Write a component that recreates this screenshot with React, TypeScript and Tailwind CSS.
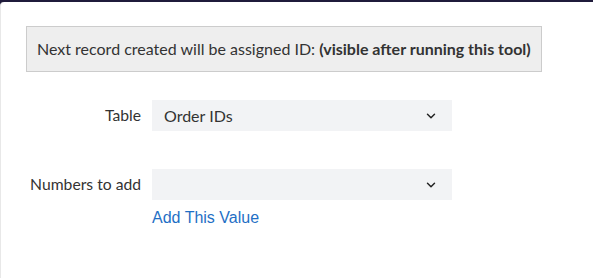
import { ChevronDown } from "lucide-react";

function SelectBox({ value }: { value?: string }) {
  return (
    <div className="flex h-[31px] w-[300px] items-center justify-between bg-[#f2f3f5] pl-[12px] pr-[14px] text-[16px] text-[#333]">
      <span>{value ?? ""}</span>
      <ChevronDown className="h-[14px] w-[14px] text-[#222]" strokeWidth={2.5} />
    </div>
  );
}

export default function App() {
  return (
    <div className="h-[278px] w-[593px] overflow-hidden bg-[#1f1b3b] pt-[2px] font-['Lato','Liberation_Sans',sans-serif]">
      <div className="h-full rounded-tl-[4px] border-l border-[#e8e8e8] bg-white pl-[25px] pt-[24px]">
        <div className="flex h-[46px] w-[516px] items-center border border-[#cccccc] bg-[#eeeeee] pl-[10px] text-[16px] text-[#333]">
          <span>
            Next record created will be assigned ID:{" "}
            <b className="font-bold">(visible after running this tool)</b>
          </span>
        </div>

        <div className="-ml-[25px] mt-[28px] flex items-center">
          <div className="w-[140px] text-right text-[15.7px] text-[#333]">Table</div>
          <div className="ml-[11px]">
            <SelectBox value="Order IDs" />
          </div>
        </div>

        <div className="-ml-[25px] mt-[38px] flex items-center">
          <div className="w-[140px] text-right text-[15.7px] text-[#333]">Numbers to add</div>
          <div className="ml-[11px]">
            <SelectBox />
          </div>
        </div>

        <div className="-ml-[25px] mt-[5px] pl-[151px] leading-[24px]">
          <a href="#" className="font-['Liberation_Sans',sans-serif] text-[16px] text-[#1f6fc5]">
            Add This Value
          </a>
        </div>
      </div>
    </div>
  );
}
